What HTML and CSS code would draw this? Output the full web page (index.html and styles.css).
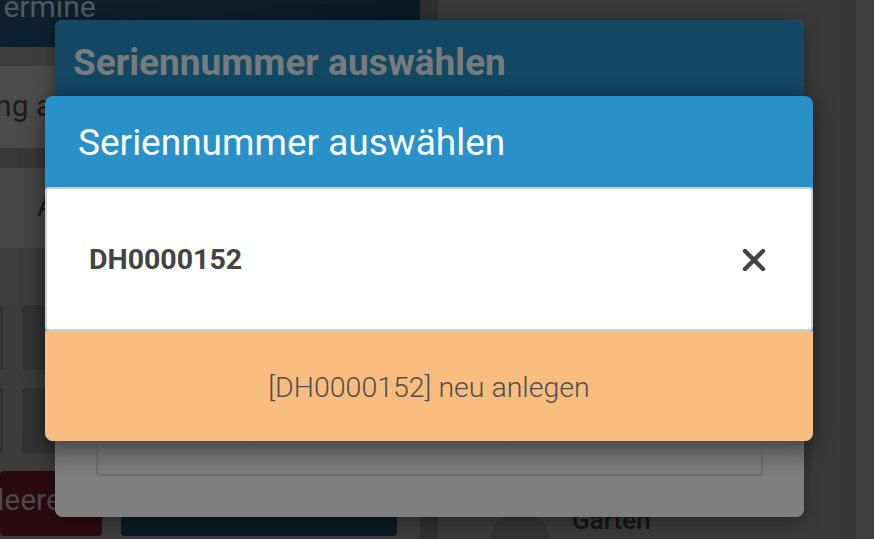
FILE: index.html
```html
<!DOCTYPE html>
<html lang="de">
<head>
<meta charset="utf-8">
<title>Seriennummer auswählen</title>
<link rel="stylesheet" href="styles.css">
</head>
<body>
<div class="app">
  <div class="left">
    <div class="topbar"><span class="topbar-text">Termine</span></div>
    <div class="row row-thin"></div>
    <div class="row row-field"><span class="field-text">Eingang a</span></div>
    <div class="row row-gap"></div>
    <div class="row row-field2"><span class="field-a">A</span></div>
    <div class="row row-gap2"></div>
    <div class="keys">
      <div class="key"></div><div class="key"></div>
      <div class="key"></div><div class="key"></div>
    </div>
    <div class="actions">
      <div class="btn btn-red"><span>leeren</span></div>
      <div class="btn btn-navy"></div>
    </div>
  </div>
  <div class="right">
    <div class="right-main">
      <div class="garten"><span class="garten-icon"></span><span class="garten-text">Garten</span></div>
    </div>
    <div class="strip strip1"></div>
    <div class="strip strip2"></div>
  </div>
</div>

<div class="dialog back-dialog">
  <div class="back-header">Seriennummer auswählen</div>
  <div class="back-body"><div class="back-input"></div></div>
</div>

<div class="dialog front-dialog">
  <div class="front-header">Seriennummer auswählen</div>
  <div class="front-body">
    <div class="serial-input">
      <span class="serial-value">DH0000152</span>
      <svg class="clear-icon" width="26" height="26" viewBox="0 0 26 26" aria-hidden="true">
        <path d="M4 4 L22 22 M22 4 L4 22" stroke="#444" stroke-width="4.4" stroke-linecap="round" fill="none"/>
      </svg>
    </div>
    <div class="create-row">[DH0000152] neu anlegen</div>
  </div>
</div>
</body>
</html>
```

FILE: styles.css
```css
* { box-sizing: border-box; }
html, body {
  margin: 0;
  padding: 0;
  width: 874px;
  height: 539px;
  overflow: hidden;
  background: #2f2f2f;
  font-family: Roboto, "Noto Sans", "Liberation Sans", sans-serif;
}
.app {
  display: flex;
  width: 874px;
  height: 539px;
  gap: 18px;
}
.left {
  width: 420px;
  display: flex;
  flex-direction: column;
  background: #3c3c3c;
}
.topbar {
  height: 47px;
  background: linear-gradient(90deg, #0d2130, #0a1a25);
  overflow: hidden;
}
.topbar-text {
  display: block;
  margin-left: -13px;
  margin-top: -11px;
  font-size: 30px;
  color: #4e5a60;
}
.row-thin { height: 19px; background: #3d3d3d; }
.row-field {
  height: 82px;
  background: linear-gradient(90deg, #4c4c4c, #484848);
  overflow: hidden;
  white-space: nowrap;
}
.field-text {
  display: block;
  margin-left: -79px;
  margin-top: 22px;
  font-size: 30px;
  color: #1c1c1c;
}
.row-gap { height: 20px; background: #383838; }
.row-field2 {
  height: 80px;
  background: #474747;
  padding: 20px 0 0 37px;
}
.field-a { font-size: 30px; color: #1c1c1c; }
.row-gap2 { height: 57px; background: #3d3d3d; }
.keys {
  display: grid;
  grid-template-columns: 33px 33px;
  gap: 18px 19px;
  margin-left: -30px;
}
.key {
  height: 65px;
  background: #323232;
  border-radius: 4px;
}
.actions {
  display: flex;
  gap: 19px;
  margin-top: 18px;
}
.btn {
  height: 65px;
  border-radius: 4px;
  overflow: hidden;
}
.btn-red {
  width: 102px;
  background: #2b0912;
}
.btn-red span {
  display: block;
  margin-left: -3px;
  margin-top: 11px;
  font-size: 30px;
  color: #4a4a4a;
}
.btn-navy { width: 276px; background: #0a1a24; }
.right {
  flex: 1;
  display: flex;
}
.right-main {
  width: 402px;
  background: #3a3a3a;
  display: flex;
  flex-direction: column;
  justify-content: flex-end;
}
.garten {
  display: flex;
  align-items: flex-start;
  gap: 22px;
  padding-left: 52px;
  height: 36px;
  overflow: hidden;
}
.garten-icon {
  width: 60px;
  height: 60px;
  border-radius: 50%;
  background: #333;
  margin-top: 8px;
}
.garten-text {
  font-size: 26px;
  font-weight: 500;
  color: #151515;
  margin-top: 2px;
}
.strip { height: 100%; }
.strip1 { width: 16px; background: #373737; }
.strip2 { flex: 1; background: #404040; }

.dialog { position: absolute; border-radius: 8px; }
.back-dialog {
  left: 55px;
  top: 20px;
  width: 749px;
  height: 497px;
  overflow: hidden;
  background: #808080;
  box-shadow: 0 4px 18px rgba(0,0,0,0.35);
}
.back-header {
  height: 90px;
  background: linear-gradient(180deg, #134864 0%, #134864 70%, #103c53 100%);
  color: #787b7d;
  font-weight: 700;
  font-size: 37px;
  line-height: 43px;
  padding: 21px 0 0 18px;
}
.back-body {
  padding: 0 41px 41px;
  background: linear-gradient(180deg, #6e6e6e 330px, #7f7f7f 370px);
  height: 407px;
  display: flex;
  flex-direction: column;
  justify-content: flex-end;
}
.back-input {
  height: 110px;
  border: 2px solid #6c6c6c;
  border-radius: 4px;
}
.front-dialog {
  left: 45px;
  top: 96px;
  width: 768px;
  height: 345px;
  background: #2791c8;
  box-shadow: 0 6px 24px rgba(0,0,0,0.45);
  display: flex;
  flex-direction: column;
}
.front-header {
  height: 91px;
  color: #ffffff;
  font-size: 37px;
  line-height: 43px;
  padding: 25px 0 0 33px;
  border-radius: 8px 8px 0 0;
}
.front-body {
  flex: 1;
  display: flex;
  flex-direction: column;
}
.serial-input {
  height: 144px;
  background: #ffffff;
  border: 2px solid #cfcfcf;
  border-radius: 4px;
  display: flex;
  align-items: center;
  justify-content: space-between;
  padding: 0 44px 0 42px;
}
.serial-value {
  font-size: 28.5px;
  font-weight: 700;
  color: #444444;
}
.clear-icon { display: block; margin-top: 2px; }
.create-row {
  flex: 1;
  background: #f9be7f;
  border-radius: 0 0 8px 8px;
  display: flex;
  align-items: center;
  justify-content: center;
  font-size: 28.5px;
  font-weight: 300;
  color: #4e4e4e;
  padding-top: 2px;
}
```
